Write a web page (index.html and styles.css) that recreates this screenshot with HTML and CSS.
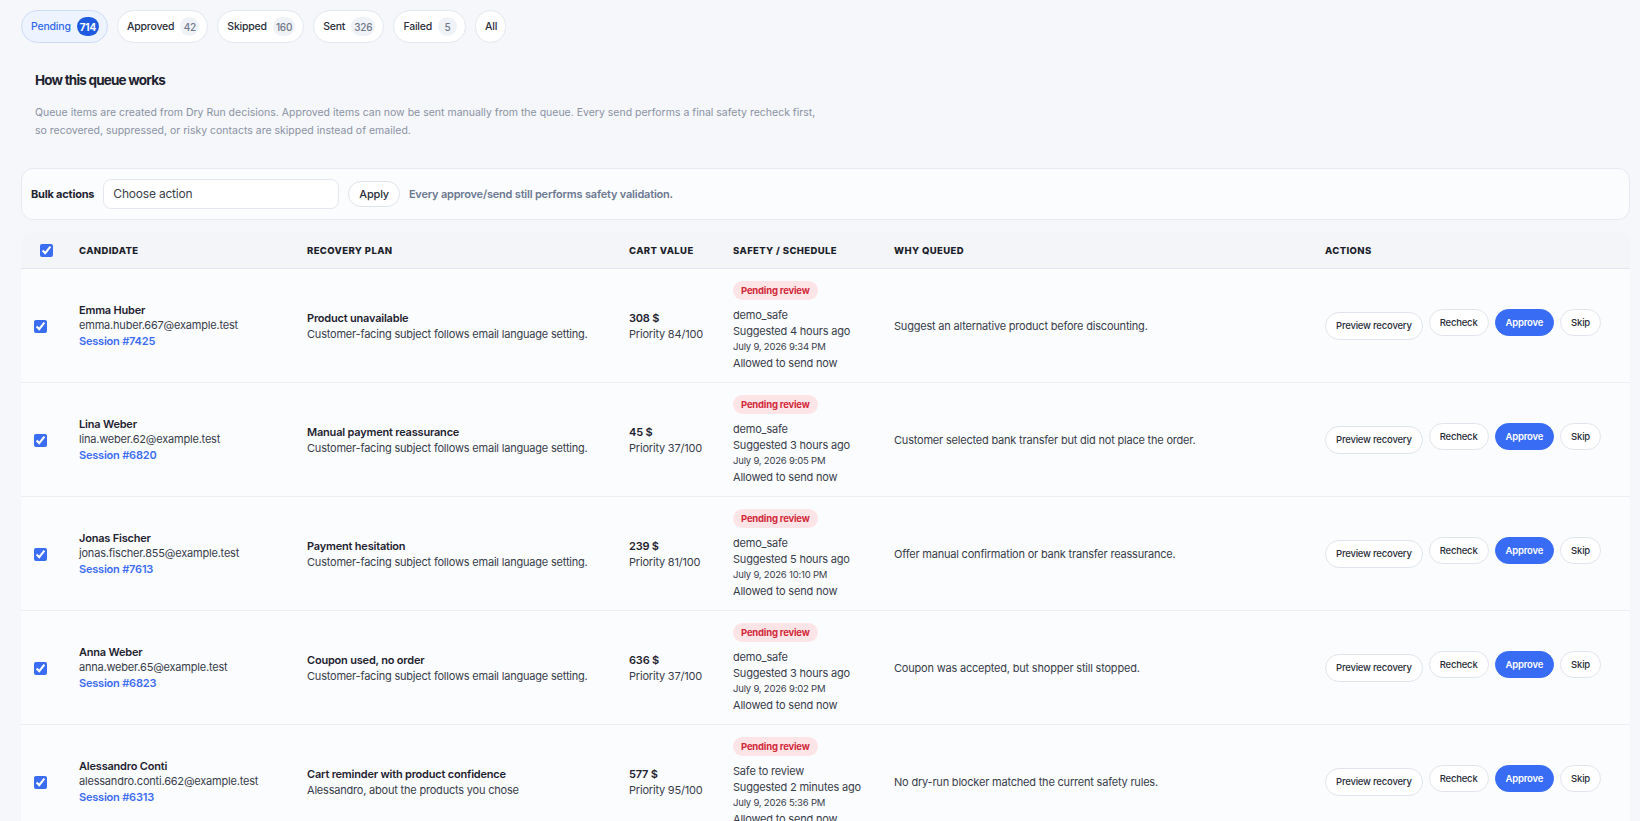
FILE: index.html
```html
<!DOCTYPE html>
<html lang="en">
<head>
    <meta charset="UTF-8">
    <meta name="viewport" content="width=device-width, initial-scale=1.0">
    <title>Recovery queue</title>
    <link rel="stylesheet" href="styles.css">
</head>
<body>
<div class="page">
    <nav class="tabs">
        <a class="tab active" href="#">Pending <span class="count">714</span></a>
        <a class="tab" href="#">Approved <span class="count">42</span></a>
        <a class="tab" href="#">Skipped <span class="count">160</span></a>
        <a class="tab" href="#">Sent <span class="count">326</span></a>
        <a class="tab" href="#">Failed <span class="count">5</span></a>
        <a class="tab" href="#">All</a>
    </nav>

    <section class="intro">
        <h2>How this queue works</h2>
        <p>Queue items are created from Dry Run decisions. Approved items can now be sent manually from the queue. Every send performs a final safety recheck first,<br>so recovered, suppressed, or risky contacts are skipped instead of emailed.</p>
    </section>

    <form class="bulk">
        <label for="bulk-action">Bulk actions</label>
        <div class="select" id="bulk-action">Choose action</div>
        <button type="button" class="btn">Apply</button>
        <span class="bulk-note">Every approve/send still performs safety validation.</span>
    </form>

    <table class="queue">
        <colgroup>
            <col style="width:46px">
            <col style="width:228px">
            <col style="width:322px">
            <col style="width:104px">
            <col style="width:161px">
            <col style="width:431px">
            <col>
        </colgroup>
        <thead>
            <tr>
                <th class="check head-check"><input type="checkbox" checked></th>
                <th>Candidate</th>
                <th>Recovery plan</th>
                <th>Cart value</th>
                <th>Safety / Schedule</th>
                <th>Why queued</th>
                <th>Actions</th>
            </tr>
        </thead>
        <tbody>
            <tr>
                <td class="check"><input type="checkbox" checked></td>
                <td><div class="name">Emma Huber</div><div class="email">emma.huber.667@example.test</div><a class="session" href="#">Session #7425</a></td>
                <td><div class="strong">Product unavailable</div><div>Customer-facing subject follows email language setting.</div></td>
                <td><div class="strong">308 $</div><div>Priority 84/100</div></td>
                <td><span class="badge">Pending review</span><div>demo_safe</div><div>Suggested 4 hours ago</div><div class="date">July 9, 2026 9:34 PM</div><div>Allowed to send now</div></td>
                <td>Suggest an alternative product before discounting.</td>
                <td><div class="actions"><a class="btn preview" href="#">Preview recovery</a><button class="btn">Recheck</button><button class="btn primary">Approve</button><button class="btn">Skip</button></div></td>
            </tr>
            <tr>
                <td class="check"><input type="checkbox" checked></td>
                <td><div class="name">Lina Weber</div><div class="email">lina.weber.62@example.test</div><a class="session" href="#">Session #6820</a></td>
                <td><div class="strong">Manual payment reassurance</div><div>Customer-facing subject follows email language setting.</div></td>
                <td><div class="strong">45 $</div><div>Priority 37/100</div></td>
                <td><span class="badge">Pending review</span><div>demo_safe</div><div>Suggested 3 hours ago</div><div class="date">July 9, 2026 9:05 PM</div><div>Allowed to send now</div></td>
                <td>Customer selected bank transfer but did not place the order.</td>
                <td><div class="actions"><a class="btn preview" href="#">Preview recovery</a><button class="btn">Recheck</button><button class="btn primary">Approve</button><button class="btn">Skip</button></div></td>
            </tr>
            <tr>
                <td class="check"><input type="checkbox" checked></td>
                <td><div class="name">Jonas Fischer</div><div class="email">jonas.fischer.855@example.test</div><a class="session" href="#">Session #7613</a></td>
                <td><div class="strong">Payment hesitation</div><div>Customer-facing subject follows email language setting.</div></td>
                <td><div class="strong">239 $</div><div>Priority 81/100</div></td>
                <td><span class="badge">Pending review</span><div>demo_safe</div><div>Suggested 5 hours ago</div><div class="date">July 9, 2026 10:10 PM</div><div>Allowed to send now</div></td>
                <td>Offer manual confirmation or bank transfer reassurance.</td>
                <td><div class="actions"><a class="btn preview" href="#">Preview recovery</a><button class="btn">Recheck</button><button class="btn primary">Approve</button><button class="btn">Skip</button></div></td>
            </tr>
            <tr>
                <td class="check"><input type="checkbox" checked></td>
                <td><div class="name">Anna Weber</div><div class="email">anna.weber.65@example.test</div><a class="session" href="#">Session #6823</a></td>
                <td><div class="strong">Coupon used, no order</div><div>Customer-facing subject follows email language setting.</div></td>
                <td><div class="strong">636 $</div><div>Priority 37/100</div></td>
                <td><span class="badge">Pending review</span><div>demo_safe</div><div>Suggested 3 hours ago</div><div class="date">July 9, 2026 9:02 PM</div><div>Allowed to send now</div></td>
                <td>Coupon was accepted, but shopper still stopped.</td>
                <td><div class="actions"><a class="btn preview" href="#">Preview recovery</a><button class="btn">Recheck</button><button class="btn primary">Approve</button><button class="btn">Skip</button></div></td>
            </tr>
            <tr>
                <td class="check"><input type="checkbox" checked></td>
                <td><div class="name">Alessandro Conti</div><div class="email">alessandro.conti.662@example.test</div><a class="session" href="#">Session #6313</a></td>
                <td><div class="strong">Cart reminder with product confidence</div><div>Alessandro, about the products you chose</div></td>
                <td><div class="strong">577 $</div><div>Priority 95/100</div></td>
                <td><span class="badge">Pending review</span><div>Safe to review</div><div>Suggested 2 minutes ago</div><div class="date">July 9, 2026 5:36 PM</div><div>Allowed to send now</div></td>
                <td>No dry-run blocker matched the current safety rules.</td>
                <td><div class="actions"><a class="btn preview" href="#">Preview recovery</a><button class="btn">Recheck</button><button class="btn primary">Approve</button><button class="btn">Skip</button></div></td>
            </tr>
        </tbody>
    </table>
</div>
</body>
</html>
```

FILE: styles.css
```css
body {
    margin: 0;
    background: #f5f7fb;
    font-family: Inter, "Noto Sans", sans-serif;
    font-size: 11px;
    letter-spacing: -0.2px;
    color: #383d4a;
}
.page {
    padding: 10px 10px 0 21px;
}
.tabs {
    display: flex;
    gap: 9px;
}
.tab {
    display: flex;
    align-items: center;
    gap: 6px;
    height: 31px;
    padding: 0 8px 0 9px;
    border: 1px solid #e3e7ef;
    border-radius: 17px;
    background: #fff;
    color: #2a2e39;
    font-weight: 500;
    font-size: 10.5px;
    text-decoration: none;
}
.tab .count {
    min-width: 19px;
    height: 19px;
    padding: 0 3px;
    box-sizing: border-box;
    border-radius: 10px;
    background: #eff2f7;
    color: #717888;
    font-size: 10px;
    display: flex;
    align-items: center;
    justify-content: center;
}
.tab.active {
    background: #eef4ff;
    border-color: #cddcf6;
    color: #3068e8;
}
.tab.active .count {
    background: #1f5be0;
    color: #fff;
    font-weight: 700;
}
.intro {
    padding: 27px 14px 0;
}
.intro h2 {
    margin: 0;
    font-size: 13.5px;
    line-height: 20px;
    font-weight: 700;
    letter-spacing: -0.8px;
    color: #1f2330;
}
.intro p {
    margin: 14px 0 0;
    line-height: 18px;
    font-size: 10.5px;
    letter-spacing: 0;
    color: #8b92a2;
}
.bulk {
    margin-top: 28px;
    display: flex;
    align-items: center;
    gap: 9px;
    padding: 10px 9px;
    background: #fbfcfe;
    border: 1px solid #e6e9f0;
    border-radius: 12px;
}
.bulk label {
    font-weight: 700;
    color: #1f2330;
}
.select {
    width: 225px;
    height: 28px;
    line-height: 28px;
    padding-left: 9px;
    border: 1px solid #e3e7ef;
    border-radius: 8px;
    background: #fff;
    font-size: 12px;
    color: #3a3f4b;
}
.bulk-note {
    font-weight: 600;
    color: #6b7890;
}
.btn {
    display: inline-flex;
    align-items: center;
    justify-content: center;
    height: 27px;
    padding: 0 10px;
    box-sizing: border-box;
    border: 1px solid #e0e4ec;
    border-radius: 14px;
    background: #fff;
    font-family: inherit;
    font-size: 9.5px;
    letter-spacing: -0.2px;
    font-weight: 500;
    color: #2a2e39;
    text-decoration: none;
    cursor: pointer;
}
.bulk .btn {
    height: 26px;
    font-size: 11px;
}
.btn.primary {
    background: #386cf5;
    border-color: #386cf5;
    color: #fff;
    font-weight: 600;
}
.queue {
    margin-top: 12px;
    width: 100%;
    table-layout: fixed;
    border-collapse: separate;
    border-spacing: 0;
}
.queue th {
    height: 36px;
    padding: 0 12px;
    background: #f4f5f9;
    border-bottom: 1px solid #e3e6ee;
    text-align: left;
    font-size: 9.5px;
    font-weight: 800;
    letter-spacing: 0.04em;
    text-transform: uppercase;
    color: #1c1f2b;
    vertical-align: middle;
}
.queue th:first-child {
    border-top-left-radius: 12px;
}
.queue th:last-child {
    border-top-right-radius: 12px;
}
.queue td {
    padding: 12px 12px 11px;
    background: #fbfcfe;
    border-bottom: 1px solid #eceef3;
    vertical-align: middle;
    line-height: 16px;
}
.queue .check {
    padding-left: 13px;
    padding-right: 0;
}
.queue .head-check {
    padding-left: 19px;
}
.queue input[type=checkbox] {
    margin: 0;
    width: 13px;
    height: 13px;
    accent-color: #3a6df2;
    display: block;
}
.name,
.email {
    line-height: 15.5px;
}
.name {
    font-weight: 600;
    color: #1f2330;
}
.session {
    display: block;
    line-height: 15.5px;
    color: #3d6df0;
    font-weight: 600;
    text-decoration: none;
}
.strong {
    font-weight: 600;
    color: #1f2330;
}
.badge {
    display: inline-block;
    height: 19px;
    line-height: 19px;
    padding: 0 8px;
    margin-bottom: 7px;
    border-radius: 10px;
    background: #fde5e7;
    color: #d1293a;
    font-size: 9.5px;
    font-weight: 700;
}
.date {
    font-size: 9.5px;
}
.actions {
    display: flex;
    align-items: flex-start;
    gap: 6px;
    margin-bottom: 4px;
}
.actions .preview {
    height: 28px;
    margin-top: 3px;
}
```
